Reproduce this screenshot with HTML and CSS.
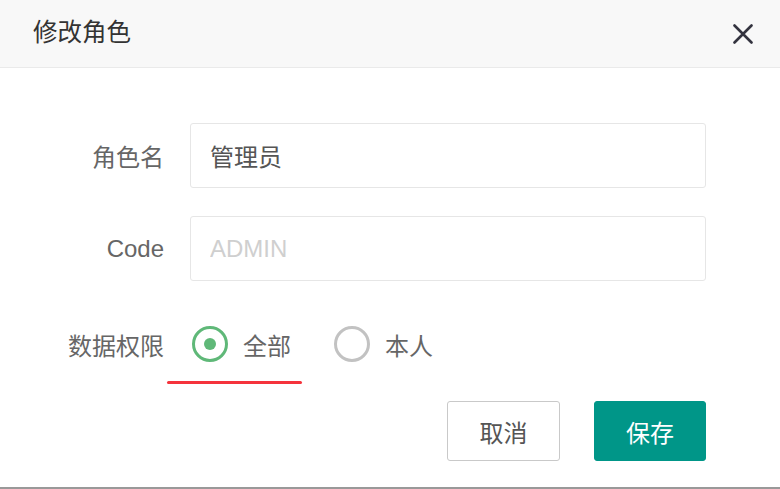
FILE: index.html
```html
<!DOCTYPE html>
<html lang="zh">
<head>
<meta charset="utf-8">
<title>修改角色</title>
<link rel="stylesheet" href="styles.css">
</head>
<body>
<div class="dialog">
  <div class="header">
    <span class="title">修改角色</span>
    <span class="close">
      <svg width="20" height="20" viewBox="0 0 20 20"><path d="M1.5 1.5 L18.5 18.5 M18.5 1.5 L1.5 18.5" stroke="#33333f" stroke-width="2.6" stroke-linecap="round"/></svg>
    </span>
  </div>
  <div class="content">
    <div class="row">
      <label class="label">角色名</label>
      <div class="field"><input class="input" type="text" value="管理员"></div>
    </div>
    <div class="row">
      <label class="label">Code</label>
      <div class="field"><input class="input" type="text" placeholder="ADMIN"></div>
    </div>
    <div class="row radio-row">
      <label class="label">数据权限</label>
      <div class="radios">
        <span class="radio checked"><i class="circle"></i><span class="rtext">全部</span></span>
        <span class="radio"><i class="circle"></i><span class="rtext">本人</span></span>
      </div>
    </div>
    <div class="mark"></div>
    <div class="actions">
      <button class="btn btn-default">取消</button>
      <button class="btn btn-primary">保存</button>
    </div>
  </div>
</div>
</body>
</html>
```
FILE: styles.css
```css
* { box-sizing: border-box; }
html, body { margin: 0; padding: 0; }
body {
  width: 780px;
  height: 489px;
  overflow: hidden;
  background: #fff;
  font-family: "Liberation Sans", "Noto Sans CJK SC", sans-serif;
}
.dialog {
  height: 489px;
  border-bottom: 2px solid #999;
  background: #fff;
}
.header {
  height: 68px;
  background: #f8f8f8;
  border-bottom: 1px solid #eaeaea;
  display: flex;
  align-items: center;
  justify-content: space-between;
  padding: 0 27px 0 33px;
}
.title {
  font-size: 24.5px;
  color: #333;
  line-height: 1;
  margin-top: -1px;
}
.close {
  display: flex;
  width: 20px;
  height: 20px;
}
.content {
  padding-top: 55px;
}
.row {
  display: flex;
  align-items: center;
  margin-bottom: 28px;
}
.label {
  width: 190px;
  padding-right: 26px;
  text-align: right;
  font-size: 24px;
  color: #666;
}
.field { width: 516px; }
.input {
  display: block;
  width: 516px;
  height: 65px;
  border: 1px solid #e6e6e6;
  border-radius: 3px;
  padding: 0 19px;
  font-family: "Liberation Sans", "Noto Sans CJK SC", sans-serif;
  font-size: 24px;
  color: #555;
  outline: none;
  background: #fff;
}
.input::placeholder { color: #cfcfcf; }
.radio-row {
  margin-top: 35px;
  margin-bottom: 0;
  height: 56px;
}
.radios {
  display: flex;
  align-items: center;
  padding-left: 2px;
}
.radio {
  display: flex;
  align-items: center;
  margin-right: 43px;
}
.circle {
  display: block;
  width: 36px;
  height: 36px;
  border: 3px solid #c2c2c2;
  border-radius: 50%;
  position: relative;
}
.radio.checked .circle { border-color: #5fb878; }
.radio.checked .circle::after {
  content: "";
  position: absolute;
  left: 9px;
  top: 9px;
  width: 12px;
  height: 12px;
  border-radius: 50%;
  background: #5fb878;
}
.rtext {
  margin-left: 15px;
  font-size: 24px;
  color: #666;
}
.mark {
  margin: 9px 0 0 167px;
  width: 135px;
  height: 3px;
  border-radius: 2px;
  background: #f5333c;
}
.actions {
  display: flex;
  justify-content: flex-end;
  gap: 34px;
  padding-right: 74px;
  margin-top: 17px;
}
.btn {
  height: 60px;
  border-radius: 3px;
  font-family: "Liberation Sans", "Noto Sans CJK SC", sans-serif;
  font-size: 24px;
  padding: 0;
  cursor: pointer;
}
.btn-default {
  width: 113px;
  background: #fff;
  border: 1px solid #c9c9c9;
  color: #555;
}
.btn-primary {
  width: 112px;
  background: #009688;
  border: 1px solid #009688;
  color: #fff;
}
```
